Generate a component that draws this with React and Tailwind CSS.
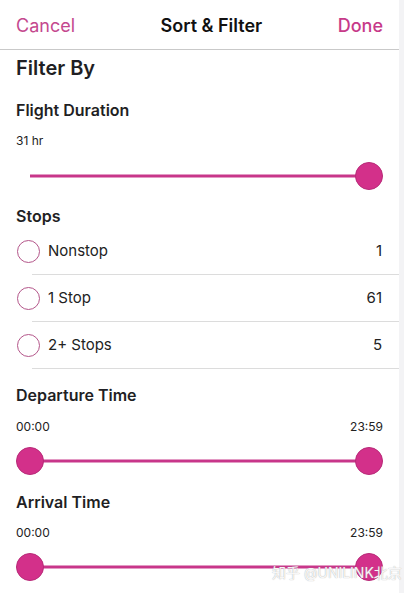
import React from 'react';

const PINK = 'bg-[#d3308a]';

const Slider = ({ left = true }) => (
    <div className="relative h-full flex items-center justify-between px-[16px]">
        <div className="absolute left-[30px] right-[31px] top-1/2 -translate-y-1/2 h-[3px] bg-[#c8368a]"></div>
        <div className={`relative w-[28px] h-[28px] rounded-full ${left ? PINK : 'bg-transparent'} ${left ? 'border border-[#b82a78]' : ''}`}></div>
        <div className={`relative w-[28px] h-[28px] rounded-full ${PINK} border border-[#b82a78]`}></div>
    </div>
);

const StopRow = ({ label, count }) => (
    <div>
        <div className="h-[46px] flex items-center pl-[17px] pr-[17px]">
            <div className="w-[23px] h-[23px] rounded-full border-[1.5px] border-[#b4568a] shrink-0"></div>
            <span className="ml-[8px] text-[15px] text-[#222]">{label}</span>
            <span className="ml-auto text-[15px] text-[#222]">{count}</span>
        </div>
        <div className="ml-[32px] h-px bg-[#dcdcdc]"></div>
    </div>
);

const App = () => {
    return (
        <div className="flex w-[404px] h-[593px] overflow-hidden bg-white" style={{ fontFamily: 'Inter, "Noto Sans CJK SC", sans-serif' }}>
            <div className="relative w-[399px] shrink-0">
                {/* header */}
                <div className="h-[50px] border-b border-[#c9c9c9] flex items-center justify-between px-[16px] pt-[2px]">
                    <span className="text-[18px] text-[#c4488e]">Cancel</span>
                    <span className="text-[18px] font-semibold text-[#111] ml-[10px]">Sort &amp; Filter</span>
                    <span className="text-[18px] font-medium text-[#c73a89]">Done</span>
                </div>

                <div className="h-[36px] flex items-center px-[16px]">
                    <span className="text-[20px] font-semibold text-[#1f1f24]">Filter By</span>
                </div>
                <div className="h-[48px] flex items-center px-[16px]">
                    <span className="text-[16px] font-semibold text-[#1f1f24]">Flight Duration</span>
                </div>
                <div className="h-[14px] flex items-center px-[16px]">
                    <span className="text-[12px] text-[#222]">31 hr</span>
                </div>
                <div className="h-[56px]">
                    <Slider left={false} />
                </div>
                <div className="h-[24px] flex items-center px-[16px]">
                    <span className="text-[16px] font-semibold text-[#1f1f24]">Stops</span>
                </div>

                <StopRow label="Nonstop" count="1" />
                <StopRow label="1 Stop" count="61" />
                <StopRow label="2+ Stops" count="5" />

                <div className="h-[52px] flex items-center px-[16px]">
                    <span className="text-[16px] font-semibold text-[#1f1f24]">Departure Time</span>
                </div>
                <div className="h-[12px] flex items-center justify-between px-[16px] text-[12px] text-[#222]">
                    <span>00:00</span>
                    <span>23:59</span>
                </div>
                <div className="h-[56px]">
                    <Slider />
                </div>

                <div className="h-[26px] flex items-center px-[16px]">
                    <span className="text-[16px] font-semibold text-[#1f1f24]">Arrival Time</span>
                </div>
                <div className="h-[36px] flex items-center justify-between px-[16px] text-[12px] text-[#222]">
                    <span>00:00</span>
                    <span>23:59</span>
                </div>
                <div className="h-[32px]">
                    <Slider />
                </div>

                <span className="absolute left-[272px] top-[562px] text-[14px] text-white/90 whitespace-nowrap [text-shadow:0_0_1px_#9a9a9a]">知乎 @UNILINK北京</span>
            </div>
            <div className="flex-1 bg-[#f3f3f5]"></div>
        </div>
    );
};

export default App;
